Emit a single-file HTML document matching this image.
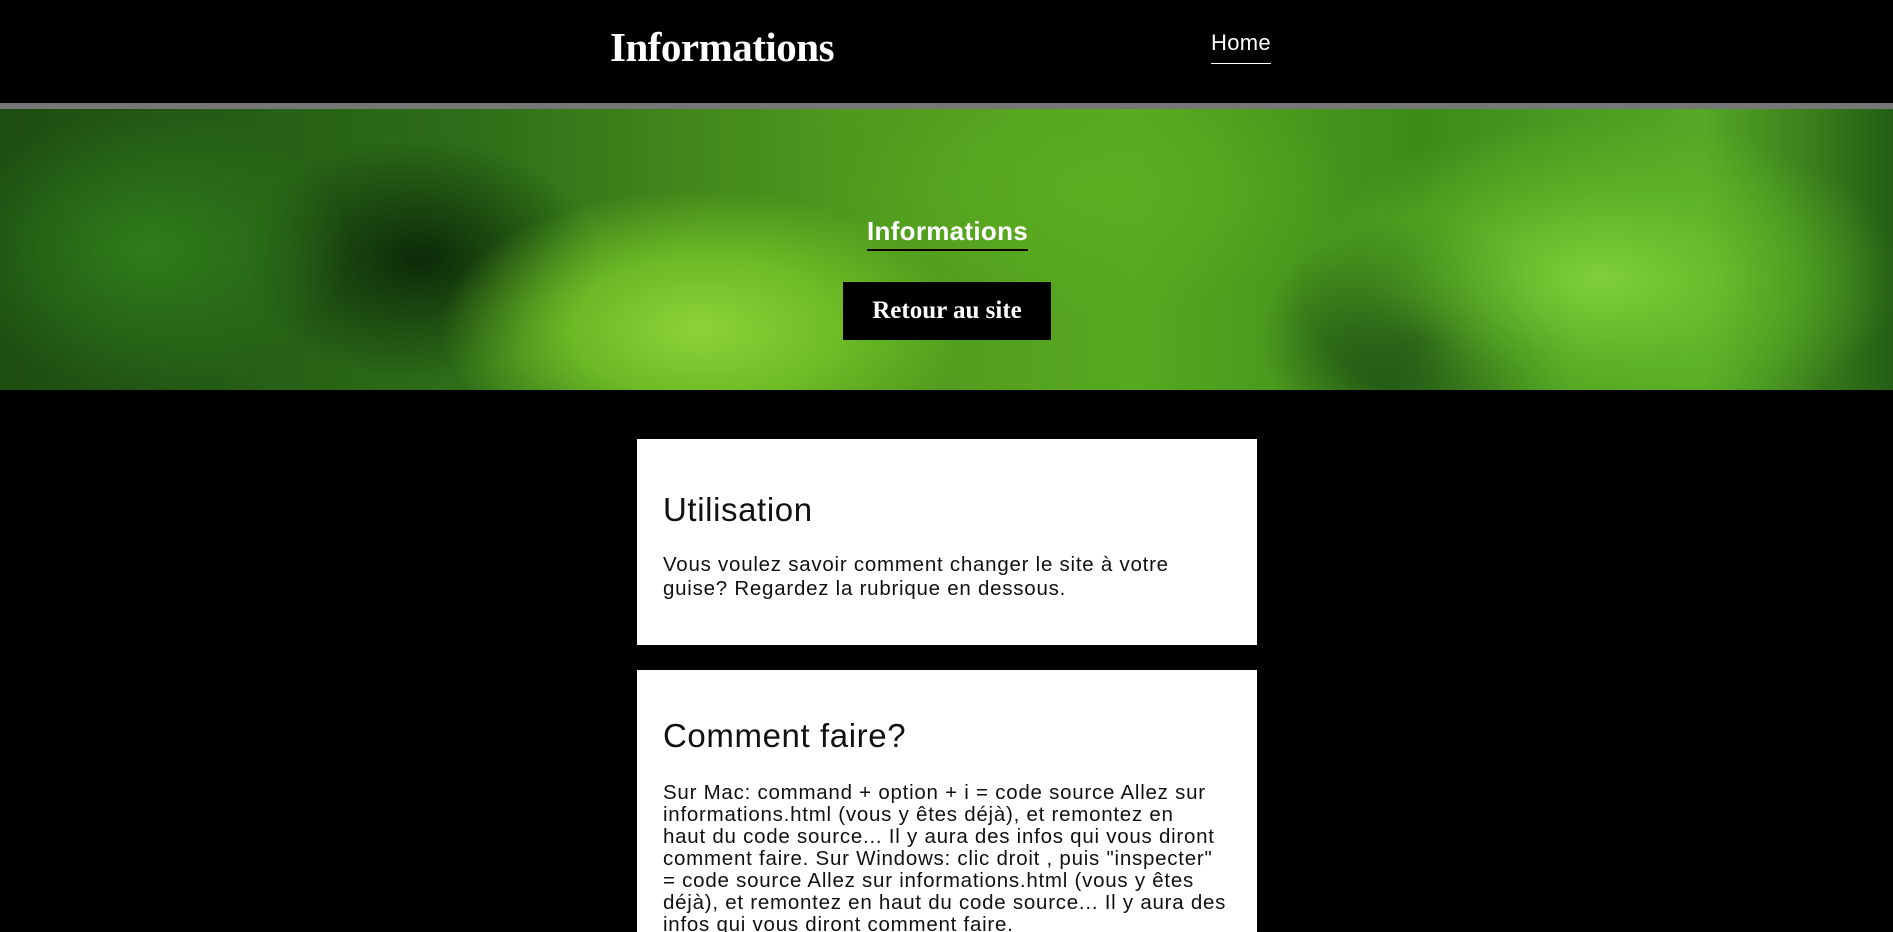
<!DOCTYPE html>
<html><head><meta charset="utf-8"><style>
body{margin:0;background:#000;width:1893px;height:932px;overflow:hidden;font-family:"Liberation Sans",sans-serif;position:relative}
.hdr{position:absolute;top:0;left:0;width:1893px;height:103px;background:#000}
.logo{position:absolute;left:610px;top:23px;color:#fff;font:bold 41px "Liberation Serif",serif;letter-spacing:-0.5px}
.home{position:absolute;left:1211px;top:30px;color:#fff;font-size:22px;letter-spacing:0.3px;padding-bottom:7px;border-bottom:1px solid #fff}
.bar{position:absolute;top:103px;left:0;width:1893px;height:6px;background:#777}
.hero{position:absolute;top:109px;left:0;width:1893px;height:281px;overflow:hidden;
background:
radial-gradient(ellipse 260px 140px at 700px 220px,#8ed23a 0%,rgba(120,200,40,.8) 50%,transparent 100%),
radial-gradient(ellipse 300px 160px at 1600px 170px,#7fcf3a 0%,rgba(100,190,40,.6) 55%,transparent 100%),
radial-gradient(ellipse 250px 120px at 1100px 80px,#5cad20 0%,transparent 100%),
radial-gradient(ellipse 200px 140px at 150px 140px,#2f7d1a 0%,transparent 100%),
radial-gradient(ellipse 180px 120px at 420px 150px,#0c2a08 0%,transparent 100%),
radial-gradient(ellipse 160px 120px at 1420px 230px,#0e3310 0%,transparent 100%),
linear-gradient(90deg,#1d4d12 0%,#2e6e18 25%,#4f9a1e 45%,#58a820 60%,#3d8a1a 75%,#56a826 90%,#245e15 100%)}
.ht{position:absolute;left:867px;top:216px;color:#fff;font-weight:bold;font-size:26px;letter-spacing:0.3px;padding-bottom:2px;border-bottom:2px solid #000}
.btn{position:absolute;left:843px;top:282px;width:208px;height:58px;background:#000;color:#fff;font:bold 25px "Liberation Serif",serif;text-align:center;line-height:58px}
.card{position:absolute;left:637px;width:620px;background:#fff;box-sizing:border-box;padding:0 26px;color:#111}
.card h2{font-weight:normal;font-size:33px;letter-spacing:0.6px;margin:0}
.card p{font-size:20.5px;letter-spacing:0.75px;line-height:22px;margin:0;white-space:nowrap}
</style></head><body>
<div class="hdr"><div class="logo">Informations</div><div class="home">Home</div></div>
<div class="bar"></div>
<div class="hero"></div>
<div class="ht">Informations</div>
<div class="btn">Retour au site</div>
<div class="card" style="top:439px;height:206px"><h2 style="padding-top:52px">Utilisation</h2><p style="margin-top:24px;line-height:24px">Vous voulez savoir comment changer le site à votre<br>guise? Regardez la rubrique en dessous.</p></div>
<div class="card" style="top:670px;height:262px;overflow:hidden"><h2 style="padding-top:47px">Comment faire?</h2><p style="margin-top:27px">Sur Mac: command + option + i = code source Allez sur<br>informations.html (vous y êtes déjà), et remontez en<br>haut du code source... Il y aura des infos qui vous diront<br>comment faire. Sur Windows: clic droit , puis "inspecter"<br>= code source Allez sur informations.html (vous y êtes<br>déjà), et remontez en haut du code source... Il y aura des<br>infos qui vous diront comment faire.</p></div>
</body></html>
